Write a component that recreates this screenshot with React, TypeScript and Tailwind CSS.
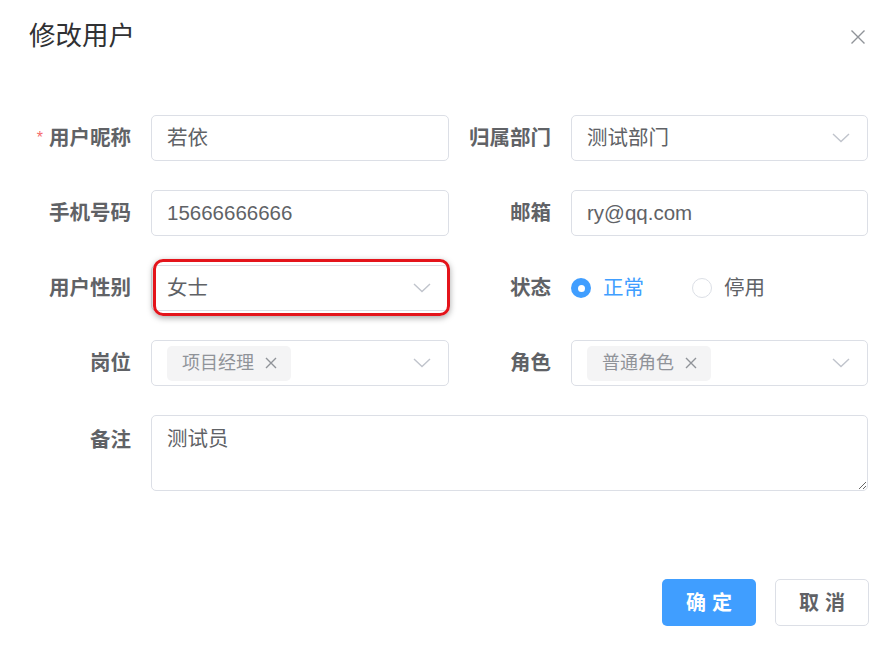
import React from "react";

const font = { fontFamily: '"Liberation Sans", "Noto Sans CJK SC", sans-serif' };

function Chevron() {
  return (
    <svg width="18" height="10" viewBox="0 0 18 10" className="shrink-0">
      <polyline points="1,1 9,8.5 17,1" fill="none" stroke="#c0c4cc" strokeWidth="1.4" />
    </svg>
  );
}

function Label({ children, required, w }: { children: React.ReactNode; required?: boolean; w: string }) {
  return (
    <div className={`${w} shrink-0 flex items-center justify-end pr-[20px] text-[20.5px] font-bold text-[#606266] whitespace-nowrap`}>
      {required && <span className="text-[#f56c6c] text-[16px] mr-[6px] font-normal">*</span>}
      {children}
    </div>
  );
}

function Input({ value }: { value: string }) {
  return (
    <div className="flex-1 h-[46px] border border-[#dcdfe6] rounded-[5px] flex items-center px-[15px] text-[20.5px] text-[#606266]">
      {value}
    </div>
  );
}

function Select({ value }: { value: string }) {
  return (
    <div className="flex-1 h-[46px] border border-[#dcdfe6] rounded-[5px] flex items-center justify-between pl-[15px] pr-[17px] text-[20.5px] text-[#606266]">
      <span>{value}</span>
      <Chevron />
    </div>
  );
}

function TagSelect({ tag }: { tag: string }) {
  return (
    <div className="flex-1 h-[46px] border border-[#dcdfe6] rounded-[5px] flex items-center justify-between pl-[15px] pr-[17px]">
      <div className="h-[35px] bg-[#f4f4f5] rounded-[5px] flex items-center pl-[15px] pr-[14px] text-[18px] text-[#909399] gap-[11px]">
        <span>{tag}</span>
        <svg width="12" height="12" viewBox="0 0 12 12">
          <path d="M1 1L11 11M11 1L1 11" stroke="#909399" strokeWidth="1.4" />
        </svg>
      </div>
      <Chevron />
    </div>
  );
}

export default function App() {
  return (
    <div className="w-[891px] h-[648px] bg-white flex flex-col" style={font}>
      <div className="h-[73px] flex items-center justify-between pl-[29px] pr-[25px]">
        <span className="text-[26.5px] text-[#303133]">修改用户</span>
        <svg width="16" height="16" viewBox="0 0 16 16">
          <path d="M1.5 1.5L14.5 14.5M14.5 1.5L1.5 14.5" stroke="#909399" strokeWidth="1.4" />
        </svg>
      </div>
      <div className="pt-[42px] pl-[30px] pr-[23px] flex flex-col gap-[29px]">
        <div className="flex h-[46px]">
          <div className="w-[419px] flex">
            <Label w="w-[121px]" required>用户昵称</Label>
            <Input value="若依" />
          </div>
          <div className="flex-1 flex">
            <Label w="w-[122px]">归属部门</Label>
            <Select value="测试部门" />
          </div>
        </div>
        <div className="flex h-[46px]">
          <div className="w-[419px] flex">
            <Label w="w-[121px]">手机号码</Label>
            <Input value="15666666666" />
          </div>
          <div className="flex-1 flex">
            <Label w="w-[122px]">邮箱</Label>
            <Input value="ry@qq.com" />
          </div>
        </div>
        <div className="flex h-[46px]">
          <div className="w-[419px] flex">
            <Label w="w-[121px]">用户性别</Label>
            <div className="flex-1 relative flex">
              <Select value="女士" />
              <div className="absolute left-[2px] right-[-1px] top-[-6px] bottom-[-5px] border-[3px] border-[#e4141b] rounded-[10px] shadow-[0_2px_6px_rgba(0,0,0,0.35)] pointer-events-none" />
            </div>
          </div>
          <div className="flex-1 flex">
            <Label w="w-[122px]">状态</Label>
            <div className="flex items-center text-[20.5px]">
              <span className="w-[20px] h-[20px] rounded-full bg-[#409eff] flex items-center justify-center">
                <span className="w-[7px] h-[7px] rounded-full bg-white" />
              </span>
              <span className="ml-[12px] text-[#409eff]">正常</span>
              <span className="ml-[48px] w-[20px] h-[20px] rounded-full border border-[#dcdfe6]" />
              <span className="ml-[12px] text-[#606266]">停用</span>
            </div>
          </div>
        </div>
        <div className="flex h-[46px]">
          <div className="w-[419px] flex">
            <Label w="w-[121px]">岗位</Label>
            <TagSelect tag="项目经理" />
          </div>
          <div className="flex-1 flex">
            <Label w="w-[122px]">角色</Label>
            <TagSelect tag="普通角色" />
          </div>
        </div>
        <div className="flex h-[76px]">
          <div className="w-[121px] shrink-0 flex justify-end pr-[20px] pt-[10px] text-[20.5px] font-bold text-[#606266]">
            备注
          </div>
          <textarea
            readOnly
            defaultValue="测试员"
            className="flex-1 h-[76px] border border-[#dcdfe6] rounded-[5px] px-[15px] py-[8px] text-[20.5px] text-[#606266] resize-y outline-none"
            style={font}
          />
        </div>
      </div>
      <div className="mt-[88px] flex justify-end gap-[19px] pr-[22px]">
        <button className="w-[94px] h-[47px] rounded-[5px] bg-[#409eff] text-white text-[20px] font-bold tracking-[6px] pl-[6px]">
          确定
        </button>
        <button className="w-[94px] h-[47px] rounded-[5px] border border-[#dcdfe6] bg-white text-[#606266] text-[20px] font-bold tracking-[6px] pl-[6px]">
          取消
        </button>
      </div>
    </div>
  );
}
